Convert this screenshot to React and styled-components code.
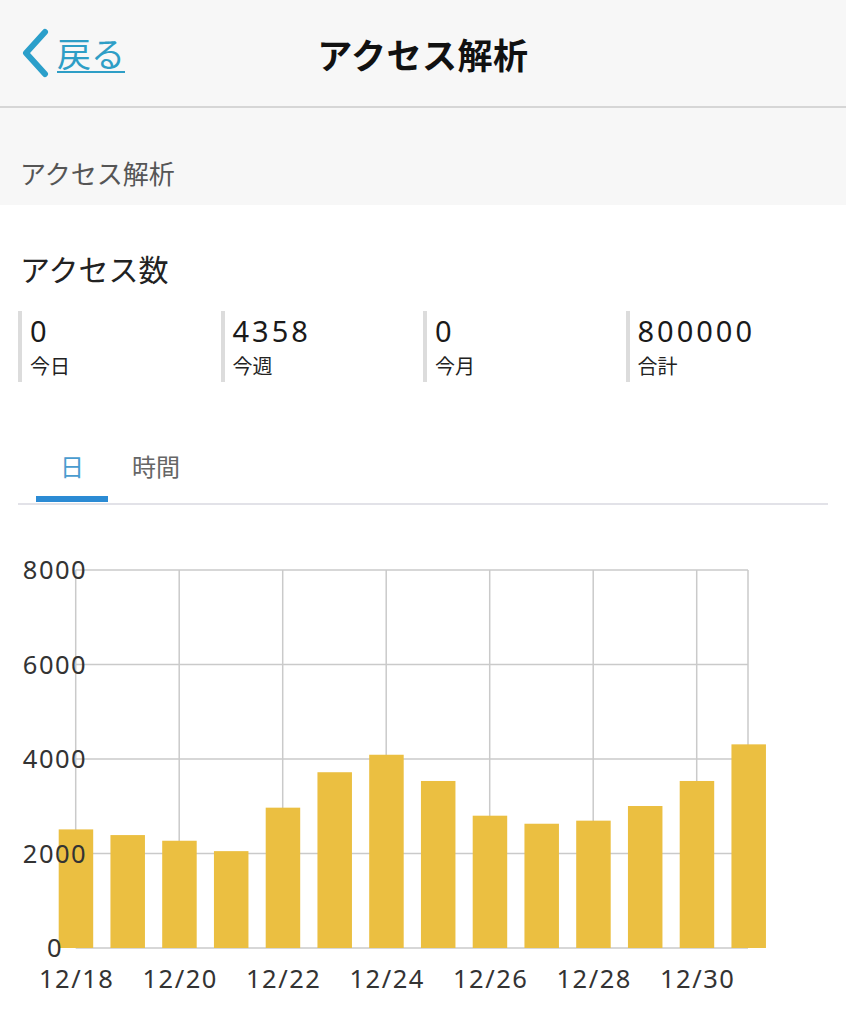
import React from 'react';
import styled, { createGlobalStyle } from 'styled-components';

const GlobalStyle = createGlobalStyle`
  html, body {
    margin: 0;
    padding: 0;
    background: #ffffff;
  }
  body {
    font-family: "Noto Sans CJK JP", "Noto Sans", sans-serif;
    color: #222;
  }
`;

const STATS = [
  { value: '0', label: '今日' },
  { value: '4358', label: '今週' },
  { value: '0', label: '今月' },
  { value: '800000', label: '合計' },
];

const DAYS = [2510, 2390, 2270, 2050, 2970, 3720, 4090, 3535, 2800, 2630, 2695, 3005, 3535, 4310];
const X_LABELS = ['12/18', '12/20', '12/22', '12/24', '12/26', '12/28', '12/30'];
const Y_TICKS = [8000, 6000, 4000, 2000, 0];

const Page = styled.div`
  width: 846px;
  min-height: 1024px;
  background: #fff;
`;

const Header = styled.header`
  display: grid;
  grid-template-columns: 1fr auto 1fr;
  align-items: center;
  height: 108px;
  background: #f7f7f7;
  border-bottom: 2px solid #d6d6d6;
  box-sizing: border-box;
`;

const BackLink = styled.a`
  display: flex;
  align-items: center;
  gap: 7px;
  padding-left: 20px;
  color: #2e9ec6;
  font-size: 34px;
  line-height: 1;
  text-decoration: underline;
  text-decoration-thickness: 2px;
  text-underline-offset: 4px;
  cursor: pointer;
  justify-self: start;

  svg {
    flex: none;
  }
`;

const Title = styled.h1`
  margin: 0;
  font-size: 35px;
  font-weight: 700;
  color: #111;
  letter-spacing: 0.5px;
`;

const SectionBand = styled.div`
  background: #f7f7f7;
  padding: 46px 20px 14px;
  font-size: 26px;
  line-height: 37px;
  color: #555;
`;

const Heading = styled.h2`
  margin: 42px 0 0;
  padding: 0 20px;
  font-size: 30px;
  font-weight: 400;
  line-height: 42px;
  color: #222;
`;

const StatsRow = styled.div`
  display: grid;
  grid-template-columns: repeat(4, 1fr);
  margin: 22px 18px 0;
`;

const Stat = styled.div`
  border-left: 4px solid #dcdcdc;
  padding-left: 8px;
  height: 71px;
  display: flex;
  flex-direction: column;
`;

const StatValue = styled.span`
  font-family: "Noto Sans", sans-serif;
  font-size: 29px;
  letter-spacing: 3px;
  line-height: 40px;
  color: #1a1a1a;
`;

const StatLabel = styled.span`
  font-size: 20px;
  line-height: 30px;
  color: #222;
`;

const Tabs = styled.div`
  display: flex;
  margin: 69px 18px 0;
  padding-left: 18px;
  border-bottom: 2px solid #e2e2e8;
`;

const Tab = styled.div`
  padding: 0 24px 15px;
  font-size: 24px;
  line-height: 30px;
  color: ${(p) => (p.$active ? '#4a9ccf' : '#666')};
  border-bottom: 6px solid ${(p) => (p.$active ? '#2b8bd4' : 'transparent')};
  margin-bottom: 1px;
  cursor: pointer;
`;

const ChartWrap = styled.div`
  margin-top: 35px;

  svg {
    display: block;
  }
`;

const BackChevron = () => (
  <svg width="30" height="50" viewBox="0 0 30 50">
    <polyline
      points="25,4 6,25 25,46"
      fill="none"
      stroke="#2b9fca"
      strokeWidth="6"
      strokeLinecap="round"
      strokeLinejoin="round"
    />
  </svg>
);

const BarChart = () => {
  const left = 75.7;
  const step = 51.75;
  const right = 748;
  const top = 30;
  const bottom = 408;
  const max = 8000;
  const yOf = (v) => bottom - (v / max) * (bottom - top);
  const grid = '#cacaca';

  return (
    <svg width="846" height="482" viewBox="0 0 846 482">
      {Y_TICKS.map((t) => (
        <line key={'h' + t} x1={left} x2={right} y1={yOf(t)} y2={yOf(t)} stroke={grid} strokeWidth="1.5" />
      ))}
      {X_LABELS.map((l, i) => (
        <line key={'v' + l} x1={left + i * step * 2} x2={left + i * step * 2} y1={top} y2={bottom} stroke={grid} strokeWidth="1.5" />
      ))}
      <line x1={right} x2={right} y1={top} y2={bottom} stroke={grid} strokeWidth="1.5" />
      {DAYS.map((v, i) => (
        <rect
          key={i}
          x={left + i * step - 17}
          y={yOf(v)}
          width="34.5"
          height={bottom - yOf(v)}
          fill="#ebbf41"
        />
      ))}
      <g fontFamily='"Noto Sans", sans-serif' fontSize="25.5" fill="#333" letterSpacing="1.5">
        {Y_TICKS.map((t) => (
          <text key={'y' + t} x="55" y={yOf(t) + 9} textAnchor="middle">
            {t}
          </text>
        ))}
        {X_LABELS.map((l, i) => (
          <text key={'x' + l} x={left + i * step * 2 + 1} y="448" textAnchor="middle">
            {l}
          </text>
        ))}
      </g>
    </svg>
  );
};

const App = () => (
  <Page>
    <GlobalStyle />
    <Header>
      <BackLink>
        <BackChevron />
        <span>戻る</span>
      </BackLink>
      <Title>アクセス解析</Title>
      <div />
    </Header>
    <SectionBand>アクセス解析</SectionBand>
    <Heading>アクセス数</Heading>
    <StatsRow>
      {STATS.map((s) => (
        <Stat key={s.label}>
          <StatValue>{s.value}</StatValue>
          <StatLabel>{s.label}</StatLabel>
        </Stat>
      ))}
    </StatsRow>
    <Tabs>
      <Tab $active>日</Tab>
      <Tab>時間</Tab>
    </Tabs>
    <ChartWrap>
      <BarChart />
    </ChartWrap>
  </Page>
);

export default App;
